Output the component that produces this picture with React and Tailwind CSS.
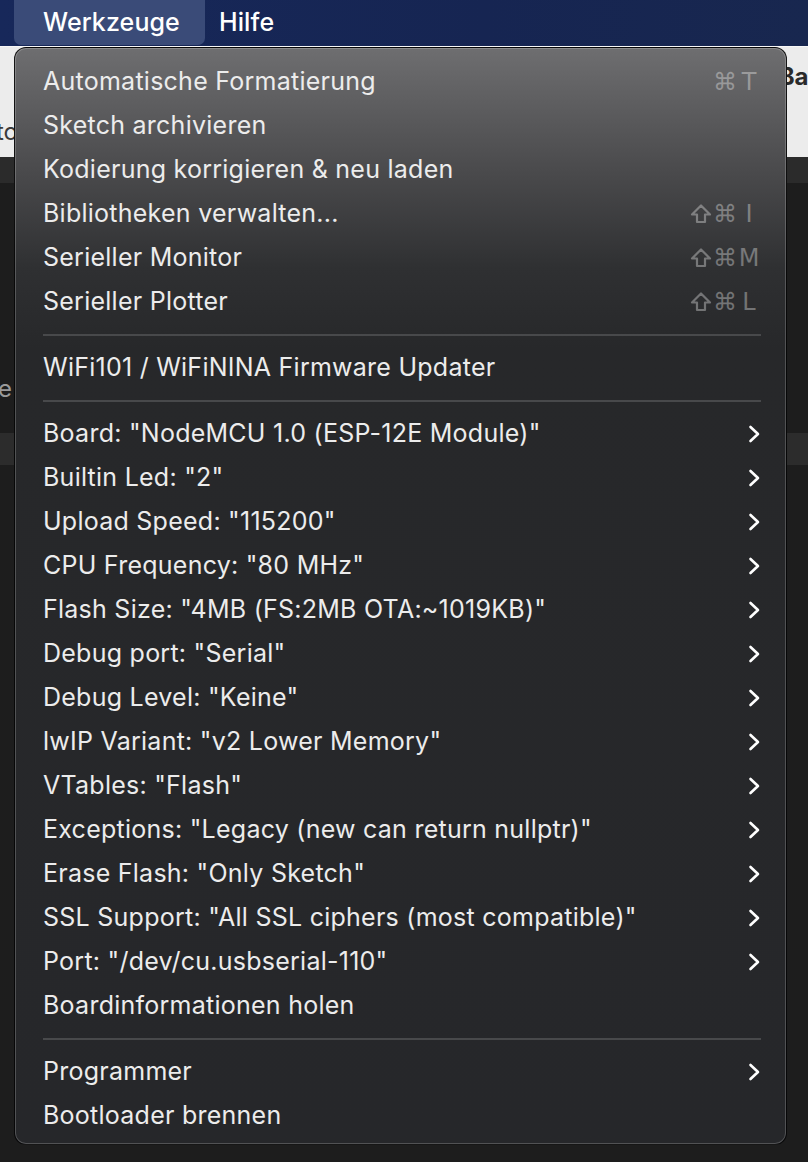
import React from 'react';

// menu entries: type "sep" draws a divider
const items = [
    { label: 'Automatische Formatierung', keys: ['⌘', 'T'] },
    { label: 'Sketch archivieren' },
    { label: 'Kodierung korrigieren & neu laden' },
    { label: 'Bibliotheken verwalten...', keys: ['⇧', '⌘', 'I'] },
    { label: 'Serieller Monitor', keys: ['⇧', '⌘', 'M'] },
    { label: 'Serieller Plotter', keys: ['⇧', '⌘', 'L'] },
    { type: 'sep' },
    { label: 'WiFi101 / WiFiNINA Firmware Updater' },
    { type: 'sep' },
    { label: 'Board: "NodeMCU 1.0 (ESP-12E Module)"', sub: true },
    { label: 'Builtin Led: "2"', sub: true },
    { label: 'Upload Speed: "115200"', sub: true },
    { label: 'CPU Frequency: "80 MHz"', sub: true },
    { label: 'Flash Size: "4MB (FS:2MB OTA:~1019KB)"', sub: true },
    { label: 'Debug port: "Serial"', sub: true },
    { label: 'Debug Level: "Keine"', sub: true },
    { label: 'lwIP Variant: "v2 Lower Memory"', sub: true },
    { label: 'VTables: "Flash"', sub: true },
    { label: 'Exceptions: "Legacy (new can return nullptr)"', sub: true },
    { label: 'Erase Flash: "Only Sketch"', sub: true },
    { label: 'SSL Support: "All SSL ciphers (most compatible)"', sub: true },
    { label: 'Port: "/dev/cu.usbserial-110"', sub: true },
    { label: 'Boardinformationen holen' },
    { type: 'sep' },
    { label: 'Programmer', sub: true },
    { label: 'Bootloader brennen' },
];

const Chevron = () => (
    <svg width="12" height="20" viewBox="0 0 12 20" className="mr-[1px]">
        <polyline points="2.5,3 10,10 2.5,17" fill="none" stroke="#ffffff" strokeWidth="2.6" strokeLinecap="round" strokeLinejoin="round" />
    </svg>
);

// flèche shift dessinée pour avoir un trait plus épais
const ShiftIcon = () => (
    <svg width="22" height="22" viewBox="0 0 22 22">
        <path d="M11 2.5 L20 11.5 H15 V19 H7 V11.5 H2 Z" fill="none" stroke="currentColor" strokeWidth="2.2" strokeLinejoin="round" />
    </svg>
);

const Shortcut = ({ keys }) => (
    <div className="flex items-center text-white/[0.34] text-[24px]" style={{ fontFamily: '"DejaVu Sans", Inter, sans-serif' }}>
        {keys.map((k, i) => (
            <span key={i} className="w-[24px] flex justify-center leading-none">
                {k === '⇧' ? <ShiftIcon /> : k}
            </span>
        ))}
    </div>
);

const MenuRow = ({ item }) => {
    if (item.type === 'sep') {
        return (
            <div className="h-[22px] flex items-center">
                <div className="h-[2px] w-full bg-[#48494b]" />
            </div>
        );
    }
    return (
        <div className="h-[44px] flex items-center justify-between">
            <span className="text-[25px] text-[#ececec] tracking-[0.25px]">{item.label}</span>
            {item.keys && <Shortcut keys={item.keys} />}
            {item.sub && <Chevron />}
        </div>
    );
};

export default function App() {
    return (
        <div className="w-[808px] h-[1162px] relative overflow-hidden bg-[#1d1d1d]" style={{ fontFamily: 'Inter, "Liberation Sans", sans-serif' }}>
            {/* barre de menu */}
            <div className="h-[46px] bg-[linear-gradient(90deg,#17285a,#162552_60%,#18274f)] flex items-center text-white text-[25px] font-medium tracking-[0.1px]">
                <div className="ml-[14px] h-[45px] w-[191px] self-start rounded-b-[7px] bg-[#3a4b78] pl-[29px] flex items-center">
                    Werkzeuge
                </div>
                <div className="ml-[14px]">Hilfe</div>
            </div>

            {/* contenu de fond */}
            <div className="h-[111px] bg-[#ececec] border-t border-[#f8f8f8] flex justify-between items-start">
                <span className="mt-[67px] ml-[-4px] text-[24px] text-[#3a3a3a]">to</span>
                <span className="mt-[12px] mr-[-14px] text-[24px] font-bold text-[#2a2a2a]">Bas</span>
            </div>
            <div className="h-[26px] bg-[#2b2b2b]" />
            <div className="h-[232px] flex items-end">
                <span className="mb-[8px] ml-[-2px] text-[24px] text-[#9a9a9a]">e</span>
            </div>
            <div className="h-[32px] mt-[18px] bg-[#2c2c2c]" />

            {/* menu déroulant */}
            <div className="absolute left-[14px] top-[47px] w-[773px] h-[1098px] rounded-[12px] border border-black/80 shadow-[inset_0_0_0_1px_rgba(255,255,255,0.2)] bg-[linear-gradient(180deg,#6e6e70_0px,#4b4b4d_120px,#2f3032_220px,#27282a_300px,#26272a_100%)] pl-[28px] pr-[25px] pt-[12px]">
                {items.map((item, i) => (
                    <MenuRow key={i} item={item} />
                ))}
            </div>
        </div>
    );
}
